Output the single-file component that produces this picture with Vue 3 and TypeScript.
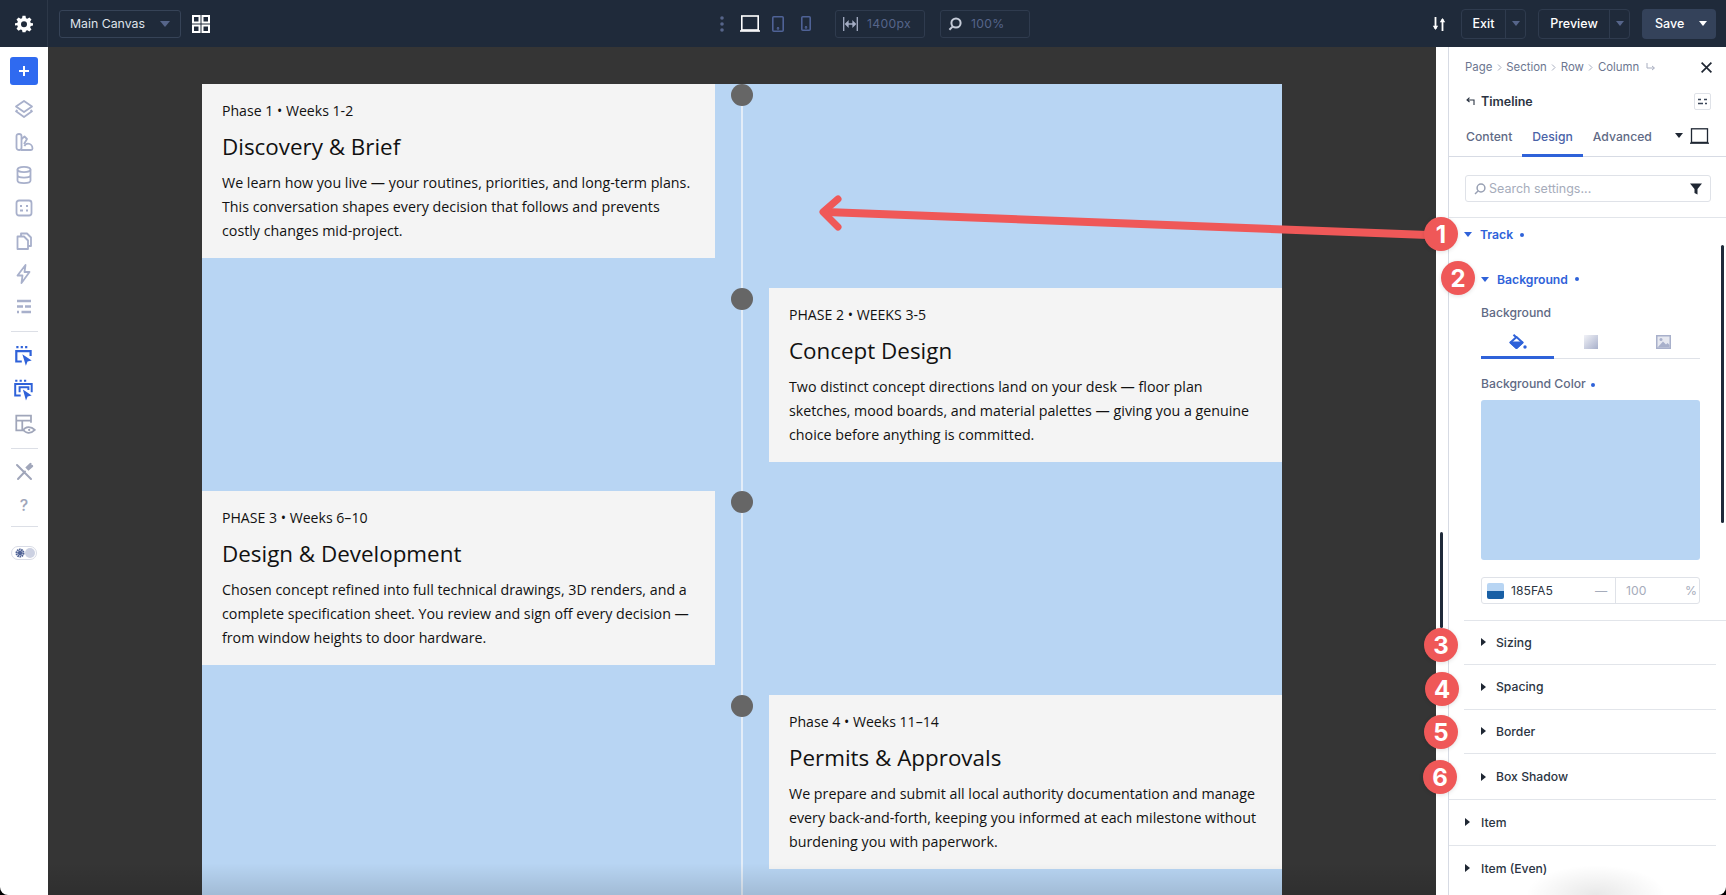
<script setup lang="ts">
interface Phase {
  meta: string;
  title: string;
  lines: string;
  side: 'left' | 'right';
}

const phases: Phase[] = [
  {
    meta: 'Phase 1 • Weeks 1-2',
    title: 'Discovery & Brief',
    lines: 'We learn how you live — your routines, priorities, and long-term plans. This conversation shapes every decision that follows and prevents costly changes mid-project.',
    side: 'left',
  },
  {
    meta: 'PHASE 2 • WEEKS 3-5',
    title: 'Concept Design',
    lines: 'Two distinct concept directions land on your desk — floor plan sketches, mood boards, and material palettes — giving you a genuine choice before anything is committed.',
    side: 'right',
  },
  {
    meta: 'PHASE 3 • Weeks 6–10',
    title: 'Design & Development',
    lines: 'Chosen concept refined into full technical drawings, 3D renders, and a complete specification sheet. You review and sign off every decision — from window heights to door hardware.',
    side: 'left',
  },
  {
    meta: 'Phase 4 • Weeks 11–14',
    title: 'Permits & Approvals',
    lines: 'We prepare and submit all local authority documentation and manage every back-and-forth, keeping you informed at each milestone without burdening you with paperwork.',
    side: 'right',
  },
];

const crumbs = ['Page', 'Section', 'Row', 'Column'];
const subGroups = ['Sizing', 'Spacing', 'Border', 'Box Shadow'];
const groups = ['Item', 'Item (Even)'];

const badges = [
  { n: 1, x: 1441, y: 234 },
  { n: 2, x: 1458, y: 278 },
  { n: 3, x: 1441, y: 645 },
  { n: 4, x: 1442, y: 689 },
  { n: 5, x: 1441, y: 732 },
  { n: 6, x: 1440, y: 777 },
];
</script>

<template>
  <div class="app">
    <header class="topbar">
      <div class="gear-cell">
        <svg width="18" height="18" viewBox="0 0 24 24" fill="#fff">
          <path fill-rule="evenodd" d="M10 1h4l.6 3.2 1.9.8L19.2 3.2 22 6l-1.8 2.7.8 1.9L24 11v3l-3 .6-.8 1.9 1.8 2.7-2.8 2.8-2.7-1.8-1.9.8L14 23h-4l-.6-3-1.9-.8-2.7 1.8L2 18.2l1.8-2.7-.8-1.9L0 14v-3l3-.4.8-1.9L2 6l2.8-2.8L7.5 5l1.9-.8L10 1zm2 7.200a4 4 0 1 0 0 8 4 4 0 0 0 0-8z" />
        </svg>
      </div>
      <div class="canvas-select">
        <span>Main Canvas</span>
        <i class="tri tri-muted"></i>
      </div>
      <svg class="grid-icon" width="20" height="20" viewBox="0 0 20 20" fill="none" stroke="#fff" stroke-width="2">
        <rect x="2" y="2" width="6.500" height="6.500" />
        <rect x="11.500" y="2" width="6.500" height="6.500" />
        <rect x="2" y="11.500" width="6.500" height="6.500" />
        <rect x="11.500" y="11.500" width="6.500" height="6.500" />
      </svg>

      <div class="center-tools">
        <svg width="4" height="16" viewBox="0 0 4 16" fill="#56658a">
          <circle cx="2" cy="2" r="1.800" />
          <circle cx="2" cy="8" r="1.800" />
          <circle cx="2" cy="14" r="1.800" />
        </svg>
        <svg class="laptop" width="20" height="17" viewBox="0 0 20 17" fill="none" stroke="#fff" stroke-width="1.600">
          <rect x="1.800" y="1" width="16.400" height="14" />
          <path d="M0 16h20" />
        </svg>
        <svg class="tablet" width="12" height="16" viewBox="0 0 12 16" fill="none" stroke="#4f6296" stroke-width="1.600">
          <rect x=".8" y=".8" width="10.400" height="14.400" rx="1" />
          <circle cx="6" cy="12.400" r=".5" />
        </svg>
        <svg class="phone" width="10" height="15" viewBox="0 0 10 15" fill="none" stroke="#4f6296" stroke-width="1.600">
          <rect x=".8" y=".8" width="8.400" height="13.400" rx="1" />
          <circle cx="5" cy="11.400" r=".5" />
        </svg>
        <div class="readout width-box">
          <svg width="15" height="14" viewBox="0 0 15 14" fill="none" stroke="#a4adc4" stroke-width="1.300">
            <path d="M.7 0v14M14.300 0v14M3 7h9" />
            <path d="M5 4.600 2.600 7 5 9.400zM10 4.600 12.400 7 10 9.400z" fill="#a4adc4" />
          </svg>
          <span>1400px</span>
        </div>
        <div class="readout zoom-box">
          <svg width="14" height="14" viewBox="0 0 14 14" fill="none" stroke="#c5cbd8" stroke-width="2">
            <circle cx="8" cy="6" r="4.600" />
            <path d="M4.600 9.600 1.400 12.800" />
          </svg>
          <span>100%</span>
        </div>
      </div>

      <div class="right-tools">
        <svg width="14" height="14" viewBox="0 0 14 14" fill="none" stroke="#fff" stroke-width="1.800">
          <path d="M3.500 0v12M10.500 14V2" />
          <path d="M.8 8.800 3.500 13l2.700-4.200zM7.800 5.200 10.500 1l2.700 4.200z" fill="#fff" stroke="none" />
        </svg>
        <div class="split exit-btn">
          <span class="split-label">Exit</span>
          <span class="split-caret"><i class="tri tri-small tri-muted"></i></span>
        </div>
        <div class="split preview-btn">
          <span class="split-label">Preview</span>
          <span class="split-caret"><i class="tri tri-small tri-muted"></i></span>
        </div>
        <div class="save-btn">
          <span>Save</span>
          <i class="tri tri-small tri-white"></i>
        </div>
      </div>
    </header>

    <div class="workspace">
      <aside class="sidebar">
        <button class="add-btn" type="button">
          <svg width="12" height="12" viewBox="0 0 12 12" stroke="#fff" stroke-width="2">
            <path d="M6 1v10M1 6h10" />
          </svg>
        </button>
        <div class="side-icons first-icons">
          <svg viewBox="0 0 20 20" fill="none" stroke="#a8b0cb" stroke-width="1.800" stroke-linejoin="round">
            <path d="M10 2 18 7.500 10 13 2 7.500z" />
            <path d="M3.400 11 2 12.300 10 18l8-5.700-1.400-1.300" />
          </svg>
          <svg viewBox="0 0 20 20" fill="none" stroke="#a8b0cb" stroke-width="1.800" stroke-linejoin="round">
            <path d="M2.500 4C2.500 2.700 3.500 2 5 2s2.500.7 2.500 2v12c0 1.200-.8 2-2.200 2-1.700 0-2.800-.9-2.800-2.500z" />
            <path d="M7.500 7 10.500 4.500 13 7l-3 5" />
            <path d="M7 18h10c1 0 1.500-.6 1.500-1.500 0-2.700-2-4.800-4.500-4.800-1.600 0-3 1-3.600 2.500" />
          </svg>
          <svg viewBox="0 0 20 20" fill="none" stroke="#a8b0cb" stroke-width="1.800">
            <ellipse cx="10" cy="4.500" rx="6.500" ry="2.600" />
            <path d="M3.500 4.500v11c0 1.500 3 2.600 6.500 2.600s6.500-1.100 6.500-2.600v-11M3.500 10c0 1.500 3 2.600 6.500 2.600s6.500-1.100 6.500-2.600" />
          </svg>
          <svg viewBox="0 0 20 20" fill="none" stroke="#a8b0cb" stroke-width="1.800">
            <rect x="2.500" y="2.500" width="15" height="15" rx="2.500" />
            <path d="M6 8h2M12 8h2M6 12.500h3M12 12.500h2" />
          </svg>
          <svg viewBox="0 0 20 20" fill="none" stroke="#a8b0cb" stroke-width="1.800" stroke-linejoin="round">
            <path d="M7 5V2.500h6L17 6.500V15h-3" />
            <path d="M3.500 5.500H10l4 4V18H3.500z" />
          </svg>
          <svg viewBox="0 0 20 20" fill="none" stroke="#a8b0cb" stroke-width="1.800" stroke-linejoin="round">
            <path d="M11.500 1 3.500 11.500h5L7.500 19l8-11h-5z" />
          </svg>
          <svg viewBox="0 0 20 20" fill="none" stroke="#a8b0cb" stroke-width="2.400">
            <path d="M3 4h14M3 9.500h6M11 9.500h6M3 15h2M7.500 15H17" />
          </svg>
        </div>
        <hr />
        <div class="side-icons second-icons">
          <svg viewBox="0 0 20 20" fill="none" stroke="#2f62d9" stroke-width="2">
            <path d="M3 2h2M7 2h2M11 2h2" />
            <path d="M8 15H3V5.500h13V10" />
            <path d="M8.500 8.500 17 14l-3.800 1-1.500 3.800z" fill="#2f62d9" stroke="none" />
          </svg>
          <svg viewBox="0 0 20 20" fill="none" stroke="#2f62d9" stroke-width="1.800">
            <path d="M2 1.500h2M6 1.500h2M10 1.500h2" />
            <path d="M7 15H2V4.500h15V12" />
            <path d="M6 12V7.500h8V10" />
            <path d="M9 9.500 17 15l-3.700 1-1.500 3.600z" fill="#2f62d9" stroke="none" />
          </svg>
          <svg class="eye-icon" viewBox="0 0 22 22" fill="none" stroke="#a0a6ba" stroke-width="1.600">
            <path d="M10 16H3V2.500h13.500V9" />
            <path d="M3 7h13.500M8.500 7v9" />
            <path d="M9.500 15.500c1.800-3 6.700-4 10.500 0-3.800 4-8.700 3-10.500 0z" fill="#fff" />
            <circle cx="14.800" cy="15.500" r="1" fill="#a0a6ba" stroke="none" />
          </svg>
        </div>
        <hr class="tight" />
        <div class="side-icons third-icons">
          <svg viewBox="0 0 20 20" fill="none" stroke="#a0a6ba" stroke-width="2" stroke-linecap="round">
            <path d="M3 3l14 14M4 17 11 9.500" />
            <path d="M16.500 2 13 5.500 14.500 7 18 4" stroke-width="2.400" />
          </svg>
          <span class="help">?</span>
        </div>
        <hr class="tight" />
        <div class="mode-toggle">
          <svg width="10" height="10" viewBox="0 0 10 10">
            <circle cx="5" cy="5" r="3.400" fill="none" stroke="#4f6296" stroke-width="2.200" stroke-dasharray="1.500 .6" />
            <circle cx="5" cy="5" r="2.200" fill="#4f6296" />
          </svg>
          <span class="knob"></span>
        </div>
      </aside>

      <main class="canvas">
        <section class="timeline">
          <article
            v-for="phase in phases"
            :key="phase.title"
            class="row"
            :class="phase.side"
          >
            <div class="card">
              <p class="meta">{{ phase.meta }}</p>
              <h2 class="title">{{ phase.title }}</h2>
              <p class="body-text">{{ phase.lines }}</p>
            </div>
            <div class="axis"><span class="dot"></span></div>
          </article>
        </section>
        <div class="canvas-shade"></div>
      </main>

      <aside class="panel">
        <div class="panel-inner">
          <nav class="crumbs">
            <template v-for="(crumb, i) in crumbs" :key="crumb">
              <span>{{ crumb }}</span>
              <svg v-if="i < crumbs.length - 1" width="5" height="7" viewBox="0 0 5 7" fill="none" stroke="#a8aec0" stroke-width="1">
                <path d="M1 .5 4 3.500 1 6.500" />
              </svg>
            </template>
            <svg class="crumb-return" width="10" height="9" viewBox="0 0 10 9" fill="none" stroke="#a8aec0" stroke-width="1">
              <path d="M1 0v5h7M6 3l2.500 2L6 7" />
            </svg>
            <svg class="close" width="11" height="11" viewBox="0 0 11 11" stroke="#1f2733" stroke-width="1.700">
              <path d="M.6.6l9.800 9.800M10.400.6.600 10.400" />
            </svg>
          </nav>

          <div class="module-head">
            <svg width="9" height="8" viewBox="0 0 9 8" fill="none" stroke="#2b3442" stroke-width="1.100">
              <path d="M8 8V3H1.500M3.500 .6 1 3l2.500 2" />
            </svg>
            <span>Timeline</span>
            <span class="module-btn">
              <svg width="9" height="7" viewBox="0 0 9 7" stroke="#3b4658" stroke-width="1.300">
                <path d="M0 1.500h3M6 1.500h3M0 5.500h5M7 5.500h2" />
              </svg>
            </span>
          </div>

          <div class="tabs">
            <span class="tab">Content</span>
            <span class="tab active">Design</span>
            <span class="tab">Advanced</span>
            <i class="tri tri-small tri-dark"></i>
            <svg width="19" height="16" viewBox="0 0 19 16" fill="none" stroke="#1f2733" stroke-width="1.300">
              <rect x="1.500" y=".8" width="16" height="13.600" />
              <path d="M0 15.200h19" />
            </svg>
          </div>

          <div class="search-wrap">
            <div class="search">
              <svg width="12" height="12" viewBox="0 0 12 12" fill="none" stroke="#98a0b3" stroke-width="1.500">
                <circle cx="7" cy="5" r="3.900" />
                <path d="M4 8 1 11" />
              </svg>
              <span>Search settings...</span>
              <svg class="funnel" width="12" height="12" viewBox="0 0 12 12" fill="#1f2733">
                <path d="M0 .5h12L7.500 6v5.500l-3-1.500V6z" />
              </svg>
            </div>
          </div>

          <div class="group-head open">
            <i class="tri tri-small tri-blue"></i>
            <span>Track</span>
            <b class="mark"></b>
          </div>

          <div class="sub-head open">
            <i class="tri tri-small tri-blue"></i>
            <span>Background</span>
            <b class="mark"></b>
          </div>

          <div class="bg-block">
            <label class="field-label">Background</label>
            <div class="bg-tabs">
              <span class="bg-tab active">
                <svg width="18" height="16" viewBox="0 0 18 16" fill="#2f62d9" stroke="#2f62d9" stroke-width="2" stroke-linejoin="round">
                  <path d="M7.500 3 13.500 8.500 7.500 14 1.500 8.500z" fill="none" />
                  <path d="M1.500 8.500h12L7.500 14z" />
                  <path d="M4.500 .8 7.500 3.500" fill="none" />
                  <circle cx="16" cy="13" r="1.700" stroke="none" />
                </svg>
              </span>
              <span class="bg-tab">
                <i class="gradient-chip"></i>
              </span>
              <span class="bg-tab">
                <svg width="15" height="14" viewBox="0 0 15 14">
                  <rect width="15" height="14" fill="#a8b0cb" />
                  <rect x="1.500" y="1.500" width="12" height="11" fill="#e6e8f0" />
                  <circle cx="5" cy="4.500" r="1.500" fill="#a8b0cb" />
                  <path d="M1.500 12.500 7 6.500l3 3 1.500-1.500 2 2v2.500z" fill="#a8b0cb" />
                </svg>
              </span>
            </div>
            <label class="field-label color-label">Background Color <b class="mark"></b></label>
            <div class="color-preview"></div>
            <div class="color-input">
              <span class="swatch"></span>
              <span class="hex">185FA5</span>
              <span class="dash">—</span>
              <span class="alpha">100</span>
              <span class="percent">%</span>
            </div>
          </div>

          <div class="sub-list">
            <div v-for="name in subGroups" :key="name" class="sub-item">
              <i class="tri-right"></i>
              <span>{{ name }}</span>
            </div>
          </div>

          <div v-for="name in groups" :key="name" class="group-item">
            <i class="tri-right"></i>
            <span>{{ name }}</span>
          </div>
        </div>
        <div class="panel-scroll"></div>
        <div class="edge-scroll"></div>
        <div class="panel-fade"></div>
      </aside>
    </div>

    <!-- annotations drawn over the screenshot -->
    <svg class="arrow" width="1726" height="895" viewBox="0 0 1726 895" fill="none" stroke="#ef5858" stroke-linecap="round" stroke-linejoin="round">
      <path d="M1428 235 826 212" stroke-width="8" />
      <path d="M838 199 823 212 838 227" stroke-width="7" />
    </svg>
    <span
      v-for="badge in badges"
      :key="badge.n"
      class="badge"
      :style="{ left: badge.x + 'px', top: badge.y + 'px' }"
    >{{ badge.n }}</span>
  </div>
</template>

<style scoped>
.app {
  width: 1726px;
  height: 895px;
  display: flex;
  flex-direction: column;
  overflow: hidden;
  position: relative;
  border-radius: 0 0 8px 8px;
  font-family: Inter, "Liberation Sans", sans-serif;
}

/* top bar */
.topbar {
  height: 47px;
  flex: none;
  display: flex;
  align-items: center;
  background: #1f2a3a;
  color: #fff;
}

.gear-cell {
  width: 48px;
  height: 47px;
  display: flex;
  align-items: center;
  justify-content: center;
  border-right: 1px solid #2d3848;
  box-sizing: border-box;
}

.canvas-select {
  width: 122px;
  height: 28px;
  margin-left: 11px;
  padding: 0 10px;
  box-sizing: border-box;
  display: flex;
  align-items: center;
  justify-content: space-between;
  border: 1px solid #364357;
  border-radius: 3px;
  font-size: 12.300px;
  color: #dfe3ea;
}

.grid-icon {
  margin-left: 10px;
}

.center-tools {
  display: flex;
  align-items: center;
  margin-left: 509px;
}

.laptop { margin-left: 16px; }
.tablet { margin-left: 12px; }
.phone { margin-left: 17px; }

.readout {
  width: 90px;
  height: 28px;
  box-sizing: border-box;
  display: flex;
  align-items: center;
  gap: 9px;
  padding-left: 7px;
  border: 1px solid #2f3b4e;
  border-radius: 3px;
  font-size: 12.200px;
  letter-spacing: 0.3px;
  color: #56658a;
}

.width-box { margin-left: 24px; }
.zoom-box { margin-left: 15px; }

.right-tools {
  display: flex;
  align-items: center;
  margin-left: auto;
  padding-right: 10px;
}

.split {
  height: 30px;
  margin-left: 15px;
  box-sizing: border-box;
  display: flex;
  border: 1px solid #2f3b4e;
  border-radius: 4px;
  font-size: 12.500px;
  font-weight: 500;
}

.split-label {
  display: flex;
  align-items: center;
  justify-content: center;
}

.split-caret {
  width: 19px;
  display: flex;
  align-items: center;
  justify-content: center;
  border-left: 1px solid #2f3b4e;
}

.exit-btn .split-label { width: 43px; }
.preview-btn { margin-left: 12px; }
.preview-btn .split-label { width: 70px; }

.save-btn {
  width: 74px;
  height: 30px;
  margin-left: 12px;
  box-sizing: border-box;
  padding: 0 9px 0 13px;
  display: flex;
  align-items: center;
  justify-content: space-between;
  background: #34425a;
  border-radius: 4px;
  font-size: 12.500px;
  font-weight: 500;
}

.tri {
  display: block;
  width: 0;
  height: 0;
  border-left: 5px solid transparent;
  border-right: 5px solid transparent;
  border-top: 6px solid;
}

.tri-small {
  border-left-width: 4px;
  border-right-width: 4px;
  border-top-width: 5px;
}

.tri-muted { border-top-color: #56658a; }
.tri-white { border-top-color: #fff; }
.tri-dark { border-top-color: #1f2733; }
.tri-blue { border-top-color: #2f62d9; }

.tri-right {
  display: block;
  width: 0;
  height: 0;
  border-top: 4px solid transparent;
  border-bottom: 4px solid transparent;
  border-left: 5px solid #1f2733;
}

/* layout */
.workspace {
  flex: 1;
  min-height: 0;
  display: flex;
}

/* left rail */
.sidebar {
  width: 48px;
  flex: none;
  box-sizing: border-box;
  padding-top: 10px;
  display: flex;
  flex-direction: column;
  align-items: center;
  background: #fff;
}

.add-btn {
  width: 28px;
  height: 28px;
  padding: 0;
  border: 0;
  border-radius: 3px;
  background: #2f6af0;
  display: flex;
  align-items: center;
  justify-content: center;
}

.side-icons {
  display: flex;
  flex-direction: column;
  align-items: center;
  gap: 13px;
}

.side-icons svg {
  width: 20px;
  height: 20px;
  display: block;
}

.first-icons { margin-top: 14px; }

.second-icons {
  gap: 11.500px;
  margin-top: 13px;
}

.second-icons svg {
  width: 22px;
  height: 22px;
}

.second-icons .eye-icon {
  width: 24px;
  height: 24px;
  margin-left: 2px;
  margin-top: 1px;
}

.third-icons { margin-top: 13px; }

.sidebar hr {
  width: 27px;
  height: 1px;
  margin: 14px 0 0;
  border: 0;
  background: #dcdfe6;
}

.sidebar hr.tight { margin-top: 11px; }

.help {
  height: 20px;
  font-size: 16px;
  font-weight: 500;
  line-height: 20px;
  color: #a0a6ba;
}

.mode-toggle {
  width: 26px;
  height: 14px;
  margin-top: 19px;
  box-sizing: border-box;
  padding: 0 1px 0 3px;
  display: flex;
  align-items: center;
  justify-content: space-between;
  border: 1px solid #d9dce6;
  border-radius: 7px;
}

.knob {
  width: 10px;
  height: 10px;
  border-radius: 50%;
  background: #ccd1e2;
}

/* canvas + timeline */
.canvas {
  flex: 1;
  min-width: 0;
  position: relative;
  overflow: hidden;
  padding: 37px 0 0 154px;
  box-sizing: border-box;
  background: #353535;
}

.canvas-shade {
  position: absolute;
  left: 0;
  right: 0;
  bottom: 0;
  height: 32px;
  background: linear-gradient(transparent, rgba(0, 0, 0, 0.12));
}

.timeline {
  width: 1080px;
  position: relative;
  display: flex;
  flex-direction: column;
  gap: 29.500px;
  background: #b8d5f3;
  padding-bottom: 60px;
}

.timeline::before {
  content: "";
  position: absolute;
  left: 539px;
  top: 0;
  bottom: 0;
  width: 2px;
  background: #e3edf8;
}

.row {
  display: grid;
  grid-template-columns: 513px 54px 513px;
  position: relative;
}

.row.right .card { grid-column: 3; grid-row: 1; }
.row.left .card { grid-column: 1; grid-row: 1; }

.axis {
  grid-column: 2;
  grid-row: 1;
  display: flex;
  justify-content: center;
}

.dot {
  width: 22px;
  height: 22px;
  border-radius: 50%;
  background: #666;
}

.card {
  height: 174px;
  box-sizing: border-box;
  padding: 16px 20px 0;
  background: #f4f4f4;
  color: #111;
  font-family: "Open Sans", sans-serif;
}

.meta {
  margin: 0;
  font-size: 14.100px;
  line-height: 22px;
}

.title {
  margin: 8px 0 0;
  font-size: 22.400px;
  font-weight: 400;
  line-height: 34px;
}

.body-text {
  margin: 7px 0 0;
  font-size: 14.250px;
  line-height: 24px;
}

/* settings panel */
.panel {
  width: 290px;
  flex: none;
  position: relative;
  overflow: hidden;
  background: #fff;
}

.panel-inner {
  height: 100%;
  margin-left: 12px;
  border-left: 1px solid #d7dbe4;
  color: #2b3442;
  font-size: 12.200px;
}

.crumbs {
  height: 40px;
  padding: 0 10px 0 16px;
  display: flex;
  align-items: center;
  gap: 4.500px;
  font-size: 11.400px;
  color: #6c7690;
}

.crumb-return { margin-left: 2px; }
.close { margin-left: auto; margin-right: 4px; }

.module-head {
  height: 28px;
  padding: 0 15px 0 17px;
  display: flex;
  align-items: center;
  gap: 6px;
  font-size: 12.500px;
  font-weight: 600;
}

.module-btn {
  width: 17px;
  height: 17px;
  margin-left: auto;
  box-sizing: border-box;
  display: flex;
  align-items: center;
  justify-content: center;
  border: 1px solid #dfe2e8;
  border-radius: 2px;
}

.tabs {
  height: 42px;
  padding: 0 17px 0 7px;
  box-sizing: border-box;
  display: flex;
  align-items: stretch;
  font-size: 12.200px;
  border-bottom: 1px solid #d7dbe4;
}

.tabs > i { align-self: center; margin-left: auto; margin-right: 7px; }
.tabs > svg { align-self: center; }

.tab {
  padding: 0 10px;
  display: flex;
  align-items: center;
  font-weight: 500;
  color: #5f6a85;
  margin-bottom: -1px;
}

.tab.active {
  color: #4a63a8;
  border-bottom: 3px solid #2f62d9;
  padding-top: 3px;
}

.search-wrap {
  height: 61px;
  box-sizing: border-box;
  padding: 18px 15px 0 16px;
  border-bottom: 1px solid #e2e5ea;
}

.search {
  height: 27px;
  box-sizing: border-box;
  padding: 0 8px;
  display: flex;
  align-items: center;
  gap: 3px;
  border: 1px solid #dfe2e8;
  border-radius: 3px;
  font-size: 12.500px;
  color: #a6acbb;
}

.funnel { margin-left: auto; }

.group-head,
.sub-head {
  display: flex;
  align-items: center;
  gap: 8px;
  font-weight: 600;
  color: #2f62d9;
}

.group-head {
  height: 33px;
  padding: 0 0 0 15px;
}

.sub-head {
  height: 20px;
  margin-top: 18px;
  padding-left: 32px;
}

.mark {
  display: inline-block;
  width: 4px;
  height: 4px;
  border-radius: 50%;
  background: #2f62d9;
  vertical-align: middle;
}

.group-head .mark,
.sub-head .mark {
  margin-left: -1px;
}

.color-label .mark { margin-left: 2px; }

.bg-block {
  padding: 0 26px 0 32px;
}

.field-label {
  display: block;
  margin-top: 15px;
  line-height: 18px;
  color: #5f6a85;
  font-weight: 500;
}

.bg-tabs {
  height: 34px;
  margin-top: 2px;
  display: grid;
  grid-template-columns: repeat(3, 1fr);
  border-bottom: 1px solid #dfe2e8;
}

.bg-tab {
  display: flex;
  align-items: center;
  justify-content: center;
  margin-bottom: -1px;
}

.bg-tab.active { border-bottom: 3px solid #2f62d9; padding-top: 3px; box-sizing: border-box; }

.gradient-chip {
  width: 14px;
  height: 14px;
  background: linear-gradient(135deg, #f1f2f7, #a8b0cb);
}

.color-label { margin-top: 16px; }

.color-preview {
  height: 160px;
  margin-top: 7px;
  border-radius: 3px;
  background: #b8d5f3;
}

.color-input {
  height: 27px;
  margin-top: 17px;
  box-sizing: border-box;
  padding-left: 5px;
  display: flex;
  align-items: center;
  border: 1px solid #dfe2e8;
  border-radius: 3px;
}

.swatch {
  width: 17px;
  height: 16px;
  border-radius: 2px;
  background: linear-gradient(#b8d5f3 50%, #185fa5 50%);
}

.hex { margin-left: 7px; font-weight: 400; }
.dash { margin-left: auto; width: 20px; color: #a6acbb; }

.alpha {
  width: 70px;
  height: 100%;
  box-sizing: border-box;
  padding-left: 10px;
  display: flex;
  align-items: center;
  border-left: 1px solid #dfe2e8;
  color: #a6acbb;
}

.percent { width: 14px; color: #a6acbb; }

.sub-list {
  margin-top: 15.500px;
  margin-left: 15px;
  border-top: 1px solid #e2e5ea;
}

.sub-item,
.group-item {
  display: flex;
  align-items: center;
  gap: 10px;
  font-weight: 500;
  box-sizing: border-box;
}

.sub-item {
  height: 44.600px;
  padding-left: 17px;
  margin-right: 10px;
  border-bottom: 1px solid #e2e5ea;
}

.sub-item:last-child { border-bottom: 0; }

.group-item {
  height: 46px;
  padding-left: 16px;
  margin-right: 10px;
  gap: 11px;
  border-top: 1px solid #e2e5ea;
}

.panel-scroll {
  position: absolute;
  right: 2px;
  top: 198px;
  width: 3px;
  height: 278px;
  border-radius: 2px;
  background: #1f2a3a;
}

.edge-scroll {
  position: absolute;
  left: 4px;
  top: 485px;
  width: 3px;
  height: 96px;
  border-radius: 2px;
  background: #1f2a3a;
}

.panel-fade {
  position: absolute;
  left: 90px;
  bottom: -30px;
  width: 140px;
  height: 60px;
  background: radial-gradient(closest-side, rgba(0, 0, 0, 0.09), transparent);
}

/* annotations */
.arrow {
  position: absolute;
  left: 0;
  top: 0;
  pointer-events: none;
}

.badge {
  position: absolute;
  width: 34px;
  height: 34px;
  margin: -17px 0 0 -17px;
  display: flex;
  align-items: center;
  justify-content: center;
  border-radius: 50%;
  background: #ef5858;
  box-shadow: 0 1px 4px rgba(0, 0, 0, 0.12);
  color: #fff;
  font-size: 24px;
  font-weight: 700;
}
</style>

<style>
html,
body {
  margin: 0;
  background: #000;
}
</style>
